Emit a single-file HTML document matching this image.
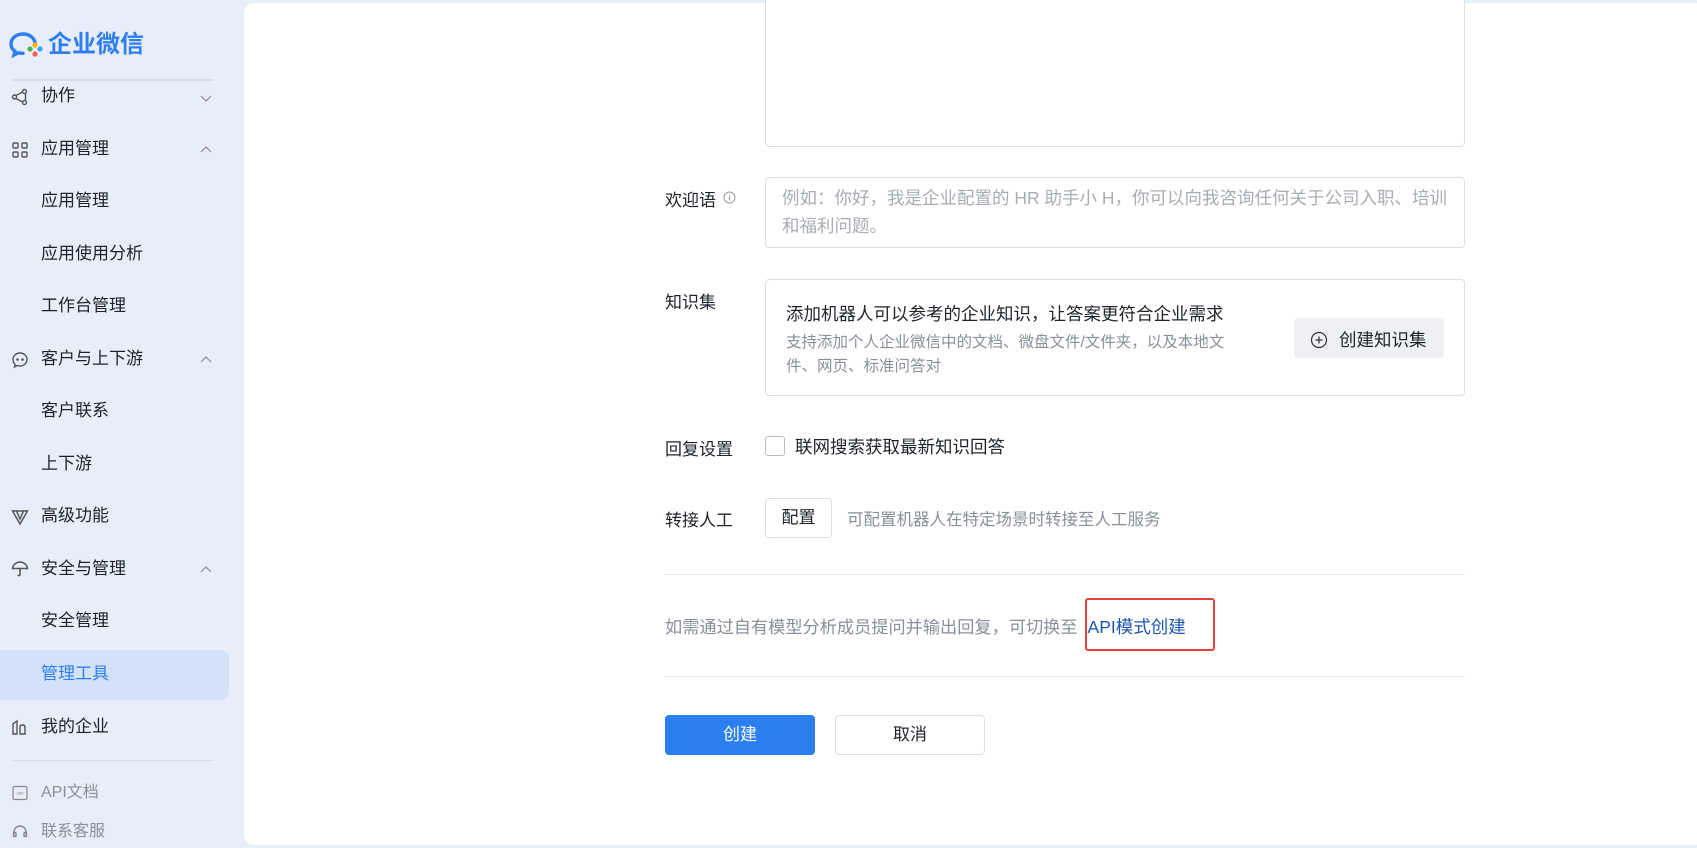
<!DOCTYPE html><html><head><meta charset="utf-8"><style>
*{box-sizing:border-box;margin:0;padding:0}
body{width:1697px;height:848px;overflow:hidden;background:#e8eef9;font-family:"Liberation Sans","Noto Sans CJK SC",sans-serif;position:relative;color:#1f2329}
.a{position:absolute;white-space:nowrap}
.main{position:absolute;left:244px;top:3px;width:1460px;height:842px;background:#fff;border-radius:10px}
.mi{position:absolute;left:41px;font-size:17px;line-height:20px;color:#1f2329}
.ic{position:absolute;left:11px;width:18px;height:18px}
.chev{position:absolute;left:200px;width:12px;height:8px}
.box{position:absolute;border:1px solid #dcdfe4;border-radius:4px;background:#fff}
.lbl{font-size:17px;color:#1f2329}
</style></head><body>
<div class="main"></div>
<svg class="a" style="left:9px;top:31px" width="36" height="30" viewBox="0 0 36 30"><path d="M14 3C7 3 2 7.5 2 13c0 3 1.5 5.5 4 7.3L5 24l4.5-2.3c1.4.4 3 .6 4.5.6" fill="none" stroke="#2f7ef0" stroke-width="3.4" stroke-linecap="round"/><path d="M14 3c6 0 11 3.5 12 8.5" fill="none" stroke="#2f7ef0" stroke-width="3.4" stroke-linecap="round"/><circle cx="31" cy="18" r="2.6" fill="#3aa4f4"/><circle cx="26" cy="14" r="2.6" fill="#f7b500"/><circle cx="21" cy="18" r="2.6" fill="#4caf50"/><circle cx="26" cy="23" r="2.6" fill="#f0604a"/></svg>
<div class="a" style="left:48px;top:30px;font-size:24px;font-weight:bold;color:#2f7ef0;line-height:30px">企业微信</div>
<div class="a" style="left:12px;top:79px;width:201px;height:2px;background:#d6dde8"></div>
<svg class="ic" style="top:88px" viewBox="0 0 18 18" fill="none" stroke="#555" stroke-width="1.4"><circle cx="3.5" cy="9" r="2"/><circle cx="13.5" cy="3.5" r="2"/><circle cx="13.5" cy="14.5" r="2"/><path d="M5 7.5 11.5 4M5 10.5l6.5 3.5M14.5 5.5v7"/></svg>
<div class="mi" style="top:86px">协作</div>
<svg class="chev" style="top:95px" viewBox="0 0 12 8"><path d="M1 1l5 5 5-5" fill="none" stroke="#999" stroke-width="1.4"/></svg>
<svg class="ic" style="top:141px" viewBox="0 0 18 18" fill="none" stroke="#555" stroke-width="1.4"><rect x="2" y="2" width="5" height="5" rx="1"/><rect x="11" y="2" width="5" height="5" rx="1"/><rect x="2" y="11" width="5" height="5" rx="1"/><rect x="11" y="11" width="5" height="5" rx="1"/></svg>
<div class="mi" style="top:139px">应用管理</div>
<svg class="chev" style="top:145px" viewBox="0 0 12 8"><path d="M1 7l5-5 5 5" fill="none" stroke="#999" stroke-width="1.4"/></svg>
<div class="mi" style="top:191px">应用管理</div>
<div class="mi" style="top:244px">应用使用分析</div>
<div class="mi" style="top:296px">工作台管理</div>
<svg class="ic" style="top:351px" viewBox="0 0 18 18" fill="none" stroke="#555" stroke-width="1.4"><path d="M9 2c4 0 7 2.8 7 6.5S13 15 9 15c-1 0-2-.2-2.8-.5L3.5 16l.6-2.6C2.8 12.2 2 10.5 2 8.5 2 4.8 5 2 9 2z"/><circle cx="6.5" cy="8.5" r=".6" fill="#555"/><circle cx="11.5" cy="8.5" r=".6" fill="#555"/></svg>
<div class="mi" style="top:349px">客户与上下游</div>
<svg class="chev" style="top:355px" viewBox="0 0 12 8"><path d="M1 7l5-5 5 5" fill="none" stroke="#999" stroke-width="1.4"/></svg>
<div class="mi" style="top:401px">客户联系</div>
<div class="mi" style="top:454px">上下游</div>
<svg class="ic" style="top:508px" viewBox="0 0 18 18" fill="none" stroke="#555" stroke-width="1.5"><path d="M1.5 3h15L9 16z"/><path d="M5.5 3l3.5 8 3.5-8"/></svg>
<div class="mi" style="top:506px">高级功能</div>
<svg class="ic" style="top:560px" viewBox="0 0 18 18" fill="none" stroke="#555" stroke-width="1.5"><path d="M1.5 8.5C2 4.5 5.5 2 9 2s7 2.5 7.5 6.5z"/><path d="M9 8.5v6c0 1.5-2 1.5-2 .3"/></svg>
<div class="mi" style="top:559px">安全与管理</div>
<svg class="chev" style="top:565px" viewBox="0 0 12 8"><path d="M1 7l5-5 5 5" fill="none" stroke="#999" stroke-width="1.4"/></svg>
<div class="mi" style="top:611px">安全管理</div>
<div class="a" style="left:0;top:650px;width:229px;height:50px;background:#d3e2f8;border-radius:0 8px 8px 0"></div>
<div class="mi" style="top:664px;color:#2f7ef0">管理工具</div>
<svg class="ic" style="top:718px" viewBox="0 0 18 18" fill="none" stroke="#555" stroke-width="1.4"><path d="M2 16V6l4-3v13zM9 16V9c0-1.5 1-2 2.5-2S14 7.5 14 9v7z"/></svg>
<div class="mi" style="top:717px">我的企业</div>
<div class="a" style="left:12px;top:760px;width:201px;height:1px;background:#d6dde8"></div>
<svg class="ic" style="top:785px;width:16px;height:16px;left:12px" viewBox="0 0 16 16" fill="none" stroke="#888" stroke-width="1.2"><rect x="1" y="1.5" width="14" height="13" rx="1.5"/><text x="8" y="10" font-size="4.5" fill="#888" stroke="none" text-anchor="middle" font-family="Liberation Sans">API</text></svg>
<div class="mi" style="top:783px;font-size:16px;color:#8a8f99">API文档</div>
<svg class="ic" style="top:824px;width:16px;height:16px;left:12px" viewBox="0 0 16 16" fill="none" stroke="#888" stroke-width="1.5"><path d="M2 10V8a6 6 0 0112 0v2"/><rect x="1.5" y="8.5" width="2.5" height="4" rx="1"/><rect x="12" y="8.5" width="2.5" height="4" rx="1"/></svg>
<div class="mi" style="top:822px;font-size:16px;color:#8a8f99">联系客服</div>

<div class="box" style="left:765px;top:-5px;width:700px;height:152px"></div>
<div class="a lbl" style="left:665px;top:186px">欢迎语</div>
<svg class="a" style="left:723px;top:191px" width="13" height="13" viewBox="0 0 13 13"><circle cx="6.5" cy="6.5" r="5.5" fill="none" stroke="#999"/><path d="M6.5 5.5v4M6.5 3.5v1" stroke="#999" stroke-width="1.2"/></svg>
<div class="box" style="left:765px;top:177px;width:700px;height:71px"></div>
<div class="a" style="left:782px;top:184px;font-size:17.5px;line-height:28px;color:#a8acb3;white-space:normal;width:665px">例如：你好，我是企业配置的 HR 助手小 H，你可以向我咨询任何关于公司入职、培训和福利问题。</div>
<div class="a lbl" style="left:665px;top:288px">知识集</div>
<div class="box" style="left:765px;top:279px;width:700px;height:117px"></div>
<div class="a" style="left:786px;top:301px;font-size:17.5px;color:#1f2329">添加机器人可以参考的企业知识，让答案更符合企业需求</div>
<div class="a" style="left:786px;top:331px;font-size:15.5px;line-height:24px;color:#8a8f99;white-space:normal;width:460px">支持添加个人企业微信中的文档、微盘文件/文件夹，以及本地文件、网页、标准问答对</div>
<div class="a" style="left:1294px;top:318px;width:150px;height:40px;background:#eef0f3;border-radius:4px"></div>
<svg class="a" style="left:1310px;top:331px" width="18" height="18" viewBox="0 0 18 18"><circle cx="9" cy="9" r="7.5" fill="none" stroke="#333" stroke-width="1.2"/><path d="M9 5.5v7M5.5 9h7" stroke="#333" stroke-width="1.2"/></svg>
<div class="a" style="left:1339px;top:327px;font-size:17.5px;color:#1f2329">创建知识集</div>
<div class="a lbl" style="left:665px;top:435px">回复设置</div>
<div class="a" style="left:765px;top:436px;width:20px;height:20px;border:1px solid #b8bcc4;border-radius:3px"></div>
<div class="a" style="left:795px;top:434px;font-size:17.5px;color:#1f2329">联网搜索获取最新知识回答</div>
<div class="a lbl" style="left:665px;top:506px">转接人工</div>
<div class="a" style="left:765px;top:498px;width:67px;height:40px;border:1px solid #dcdfe4;border-radius:4px;text-align:center;line-height:38px;font-size:17px">配置</div>
<div class="a" style="left:847px;top:506px;font-size:16.5px;color:#8a8f99">可配置机器人在特定场景时转接至人工服务</div>
<div class="a" style="left:665px;top:574px;width:800px;height:1px;background:#e6e8eb"></div>
<div class="a" style="left:665px;top:613px;font-size:17.2px;color:#8a8f99">如需通过自有模型分析成员提问并输出回复，可切换至<span style="color:#1d56b0;font-size:17.5px;margin-left:10px">API模式创建</span></div>
<div class="a" style="left:1085px;top:598px;width:130px;height:53px;border:2px solid #e8403a;border-radius:3px"></div>
<div class="a" style="left:665px;top:676px;width:800px;height:1px;background:#e6e8eb"></div>
<div class="a" style="left:665px;top:715px;width:150px;height:40px;background:#2b7ff0;border-radius:4px;color:#fff;text-align:center;line-height:40px;font-size:17px">创建</div>
<div class="a" style="left:835px;top:715px;width:150px;height:40px;border:1px solid #dcdfe4;border-radius:4px;text-align:center;line-height:38px;font-size:17px">取消</div>
</body></html>
